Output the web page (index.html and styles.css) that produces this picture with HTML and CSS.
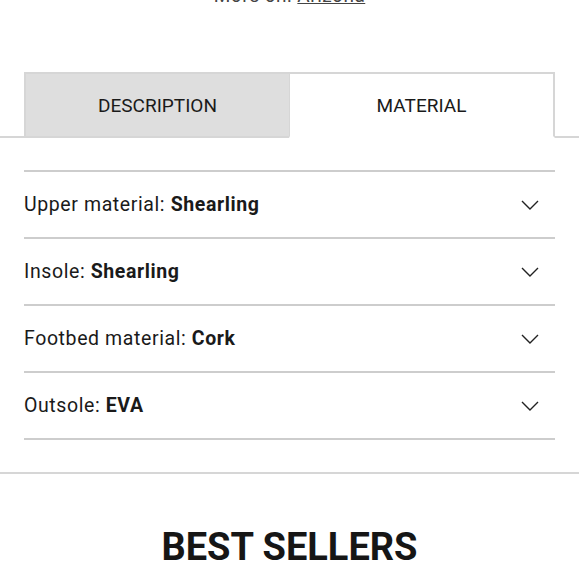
FILE: index.html
```html
<!DOCTYPE html>
<html lang="en">
<head>
<meta charset="utf-8">
<title>Material</title>
<link rel="stylesheet" href="styles.css">
</head>
<body>
<div class="more">More on: <a href="#" class="more-link">Arizona</a></div>

<div class="tabs-bar">
  <div class="tabs">
    <div class="tab tab-inactive">DESCRIPTION</div>
    <div class="tab tab-active">MATERIAL</div>
  </div>
</div>

<section class="panel">
  <ul class="acc">
    <li class="acc-row"><span class="acc-label">Upper material: <b>Shearling</b></span><svg class="chev" viewBox="0 0 18 10" width="18" height="10"><path d="M1 1 L9 9 L17 1" fill="none" stroke="#222" stroke-width="1.4"/></svg></li>
    <li class="acc-row"><span class="acc-label">Insole: <b>Shearling</b></span><svg class="chev" viewBox="0 0 18 10" width="18" height="10"><path d="M1 1 L9 9 L17 1" fill="none" stroke="#222" stroke-width="1.4"/></svg></li>
    <li class="acc-row"><span class="acc-label">Footbed material: <b>Cork</b></span><svg class="chev" viewBox="0 0 18 10" width="18" height="10"><path d="M1 1 L9 9 L17 1" fill="none" stroke="#222" stroke-width="1.4"/></svg></li>
    <li class="acc-row"><span class="acc-label">Outsole: <b>EVA</b></span><svg class="chev" viewBox="0 0 18 10" width="18" height="10"><path d="M1 1 L9 9 L17 1" fill="none" stroke="#222" stroke-width="1.4"/></svg></li>
  </ul>
</section>

<section class="best">
  <h2 class="best-title">BEST SELLERS</h2>
</section>
</body>
</html>
```

FILE: styles.css
```css
* { box-sizing: border-box; }
html, body { margin: 0; padding: 0; background: #fff; }
body {
  font-family: Roboto, "Noto Sans", "DejaVu Sans", sans-serif;
  color: #1a1a1a;
  overflow: hidden;
}
.more {
  text-align: center;
  font-size: 19px;
  line-height: 22px;
  letter-spacing: 0.5px;
  color: #444;
  margin-top: -15px;
  height: 22px;
}
.more-link {
  color: #444;
  text-decoration: underline;
  text-underline-offset: 1px;
}
.tabs-bar {
  margin-top: 65px;
  border-bottom: 2px solid #d6d6d6;
}
.tabs {
  display: flex;
  margin: 0 24px;
}
.tab {
  flex: 1 1 0;
  height: 66px;
  display: flex;
  align-items: center;
  justify-content: center;
  font-size: 19px;
  color: #1a1a1a;
  border-top: 2px solid #d6d6d6;
  margin-bottom: -2px;
}
.tab-inactive {
  background: #dedede;
  border-left: 2px solid #d6d6d6;
  border-bottom: 2px solid #d6d6d6;
}
.tab-active {
  background: #fff;
  border-left: 1px solid #d6d6d6;
  border-right: 2px solid #d6d6d6;
  border-bottom: 2px solid #fff;
}
.panel {
  padding: 32px 24px 32px;
  border-bottom: 2px solid #d6d6d6;
}
.acc {
  list-style: none;
  margin: 0;
  padding: 0;
  border-top: 2px solid #cdcdcd;
}
.acc-row {
  display: flex;
  align-items: center;
  justify-content: space-between;
  height: 67px;
  border-bottom: 2px solid #cdcdcd;
  padding-right: 16px;
  font-size: 19.5px;
  letter-spacing: 0.6px;
}
.acc-label b { font-weight: 700; }
.chev { display: block; }
.best {
  padding-top: 51px;
  text-align: center;
}
.best-title {
  margin: 0;
  font-size: 38px;
  line-height: 44px;
  font-weight: 700;
  color: #161616;
}
```
